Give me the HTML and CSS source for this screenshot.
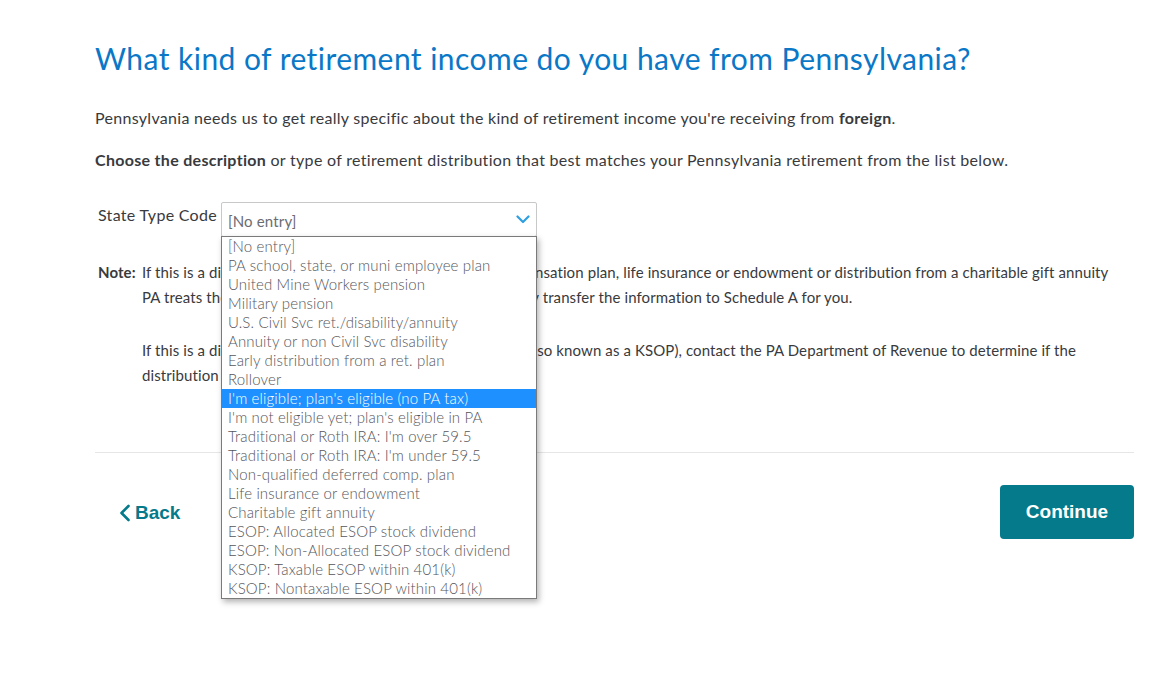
FILE: index.html
```html
<!DOCTYPE html>
<html lang="en">
<head>
    <meta charset="UTF-8">
    <title>Retirement income from Pennsylvania</title>
    <link rel="stylesheet" href="styles.css">
</head>
<body>
    <div class="page">
        <h1>What kind of retirement income do you have from Pennsylvania?</h1>
        <p class="lead">Pennsylvania needs us to get really specific about the kind of retirement income you're receiving from <b>foreign</b>.</p>
        <p class="lead"><b>Choose the description</b> or type of retirement distribution that best matches your Pennsylvania retirement from the list below.</p>

        <div class="field">
            <span class="field-label">State Type Code</span>
            <div class="select-wrap">
                <div class="select">
                    <span>[No entry]</span>
                    <svg class="chevron" width="14" height="9" viewBox="0 0 14 9"><path d="M1.5 1.5 L7 7 L12.5 1.5" fill="none" stroke="#2f9fe0" stroke-width="2.2" stroke-linecap="round" stroke-linejoin="round"/></svg>
                </div>
                <ul class="options">
                    <li>[No entry]</li>
                    <li>PA school, state, or muni employee plan</li>
                    <li>United Mine Workers pension</li>
                    <li>Military pension</li>
                    <li>U.S. Civil Svc ret./disability/annuity</li>
                    <li>Annuity or non Civil Svc disability</li>
                    <li>Early distribution from a ret. plan</li>
                    <li>Rollover</li>
                    <li class="selected">I'm eligible; plan's eligible (no PA tax)</li>
                    <li>I'm not eligible yet; plan's eligible in PA</li>
                    <li>Traditional or Roth IRA: I'm over 59.5</li>
                    <li>Traditional or Roth IRA: I'm under 59.5</li>
                    <li>Non-qualified deferred comp. plan</li>
                    <li>Life insurance or endowment</li>
                    <li>Charitable gift annuity</li>
                    <li>ESOP: Allocated ESOP stock dividend</li>
                    <li>ESOP: Non-Allocated ESOP stock dividend</li>
                    <li>KSOP: Taxable ESOP within 401(k)</li>
                    <li>KSOP: Nontaxable ESOP within 401(k)</li>
                </ul>
            </div>
        </div>

        <div class="note">
            <span class="note-label">Note:</span>
            <div class="note-text">
                <p>If this is a distribution from a non-qualified deferred compensation plan, life insurance or endowment or distribution from a charitable gift annuity<br>PA treats the income as interest income. We'll automatically transfer the information to Schedule A for you.</p>
                <p>If this is a distribution from an ESOP within a 401(k) plan (also known as a KSOP), contact the PA Department of Revenue to determine if the<br>distribution is taxable.</p>
            </div>
        </div>

        <div class="actions">
            <a href="#" class="back">
                <svg width="12" height="18" viewBox="0 0 12 18"><path d="M9.5 2 L2.5 9 L9.5 16" fill="none" stroke="#047a8b" stroke-width="2.6" stroke-linecap="round" stroke-linejoin="round"/></svg>
                Back
            </a>
            <button class="btn-continue">Continue</button>
        </div>
    </div>
</body>
</html>
```

FILE: styles.css
```css
/* General */
body {
    margin: 0;
    font-family: Lato, "Open Sans", sans-serif;
    color: #393a3d;
    background-color: #fff;
}
.page {
    width: 1039px;
    margin-left: 95px;
    padding-top: 38px;
    padding-bottom: 120px;
}
h1 {
    margin: 0 0 29px 0;
    font-size: 30px;
    font-weight: 400;
    line-height: 40px;
    color: #0a77c7;
    letter-spacing: 0.45px;
}
.lead {
    margin: 0 0 20px 0;
    font-size: 16px;
    line-height: 22px;
    letter-spacing: 0.3px;
}
.lead b {
    font-weight: 700;
}

/* Select field */
.field {
    display: flex;
    align-items: flex-start;
    margin: 31px 0 0 3px;
}
.field-label {
    font-size: 16px;
    line-height: 22px;
    width: 123px;
    padding-top: 2px;
    letter-spacing: 0.3px;
}
.select-wrap {
    position: relative;
}
.select {
    box-sizing: border-box;
    width: 316px;
    height: 35px;
    border: 1px solid #c8c8c8;
    border-radius: 2px;
    display: flex;
    align-items: center;
    justify-content: space-between;
    padding: 2px 6px 0 6px;
    font-size: 15px;
    letter-spacing: 0.15px;
    color: #6b6c72;
}
.chevron {
    margin-top: -2px;
}
.options {
    position: absolute;
    top: 34px;
    left: 0;
    box-sizing: border-box;
    width: 316px;
    margin: 0;
    padding: 0;
    list-style: none;
    background: #fff;
    border: 1px solid #7a7a7a;
    box-shadow: 2px 3px 6px rgba(0, 0, 0, 0.3);
    z-index: 5;
}
.options li {
    height: 19px;
    line-height: 18px;
    padding-left: 6px;
    font-size: 15px;
    font-weight: 300;
    color: #55565b;
    white-space: nowrap;
    letter-spacing: 0.15px;
}
.options li.selected {
    background-color: #1e90ff;
    color: #fff;
}

/* Note */
.note {
    display: flex;
    margin: 23px 0 0 3px;
    font-size: 15px;
    line-height: 25px;
    letter-spacing: 0.1px;
}
.note-label {
    font-weight: 700;
    width: 44px;
    flex: none;
}
.note-text p {
    margin: 0 0 28px 0;
}

/* Bottom actions */
.actions {
    display: flex;
    justify-content: space-between;
    align-items: center;
    border-top: 1px solid #e6e6e6;
    margin-top: 36px;
    padding-top: 32px;
}
.back {
    display: flex;
    align-items: center;
    gap: 4px;
    margin-left: 24px;
    margin-top: 2px;
    font-family: "Liberation Sans", Arial, sans-serif;
    font-weight: 700;
    font-size: 19px;
    color: #047a8b;
    text-decoration: none;
}
.btn-continue {
    width: 134px;
    height: 54px;
    border: none;
    border-radius: 4px;
    background-color: #047a8b;
    color: #fff;
    font-family: "Liberation Sans", Arial, sans-serif;
    font-weight: 700;
    font-size: 19px;
    cursor: pointer;
}
```
